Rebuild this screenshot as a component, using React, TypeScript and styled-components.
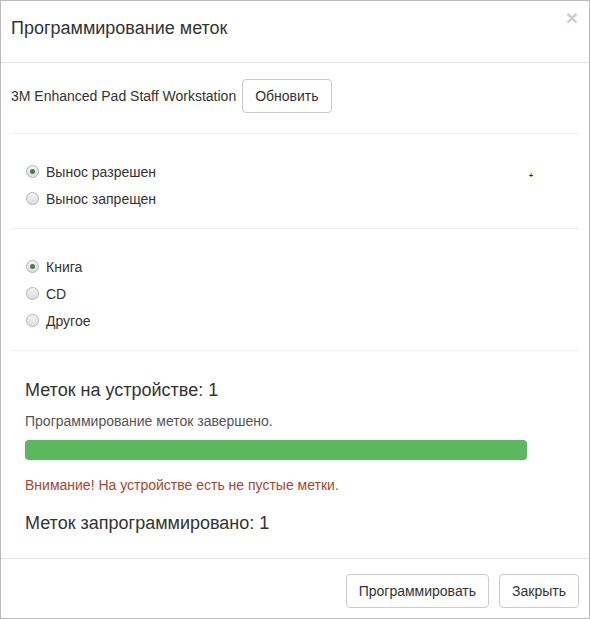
import React from "react";
import styled, { createGlobalStyle } from "styled-components";

const Global = createGlobalStyle`
  html, body { margin: 0; padding: 0; background: #fff; }
  body { font-family: "Liberation Sans", Arial, sans-serif; font-size: 14px; color: #333; }
  * { box-sizing: border-box; }
`;

const Modal = styled.div`
  width: 590px;
  height: 619px;
  border: 1px solid #bcbcbc;
  background: #fff;
  display: flex;
  flex-direction: column;
`;

const Header = styled.div`
  height: 62px;
  border-bottom: 1px solid #e5e5e5;
  padding: 14px 11px 0 10px;
  display: flex;
  justify-content: space-between;
  align-items: flex-start;
`;

const Title = styled.h4`
  margin: 0;
  font-size: 18px;
  font-weight: 400;
  line-height: 26px;
  color: #333;
`;

const Close = styled.span`
  font-size: 21px;
  font-weight: 700;
  line-height: 1;
  color: #000;
  opacity: 0.2;
  margin-top: -8px;
`;

const Body = styled.div`
  flex: 1;
  padding: 0 10px;
`;

const DeviceRow = styled.div`
  display: flex;
  align-items: center;
  gap: 6px;
  padding: 16px 0 20px;
`;

const Button = styled.button`
  font-family: "Liberation Sans", Arial, sans-serif;
  font-size: 14px;
  line-height: 20px;
  padding: 6px 12px;
  border: 1px solid #ccc;
  border-radius: 4px;
  background: #fff;
  color: #333;
  cursor: pointer;
`;

const Rule = styled.hr`
  margin: 0;
  border: 0;
  border-top: 1px solid #eee;
`;

const RadioGroup = styled.div`
  position: relative;
  padding: 24px 15px 16px;
`;

const RadioRow = styled.label`
  display: flex;
  align-items: center;
  height: 27px;
  gap: 7px;
  color: #333;
`;

const RadioDot = styled.span<{ $checked?: boolean }>`
  width: 13px;
  height: 13px;
  border-radius: 50%;
  border: 1px solid #b4b4b4;
  background: linear-gradient(#f3f3f3, #dedede);
  display: flex;
  align-items: center;
  justify-content: center;
  &::after {
    content: "";
    width: 5px;
    height: 5px;
    border-radius: 50%;
    background: ${(p) => (p.$checked ? "#4d7a4d" : "transparent")};
  }
`;

const Speck = styled.span`
  position: absolute;
  left: 518px;
  top: 38px;
  font-size: 7px;
  font-weight: 700;
  line-height: 1;
  color: #222;
`;

const Status = styled.div`
  padding: 26px 14px 0;
`;

const Count = styled.div`
  font-size: 18px;
  line-height: 26px;
  color: #333;
`;

const Info = styled.div<{ $warn?: boolean }>`
  font-size: 14px;
  line-height: 20px;
  color: ${(p) => (p.$warn ? "#a6472f" : "#555")};
  margin-top: ${(p) => (p.$warn ? "15px" : "8px")};
`;

const Progress = styled.div`
  width: 502px;
  height: 20px;
  margin-top: 9px;
  border-radius: 4px;
  background: #f5f5f5;
  overflow: hidden;
`;

const ProgressFill = styled.div`
  height: 100%;
  background: #5cb85c;
`;

const CountBottom = styled(Count)`
  margin-top: 15px;
`;

const Footer = styled.div`
  height: 60px;
  border-top: 1px solid #e5e5e5;
  display: flex;
  justify-content: flex-end;
  align-items: flex-start;
  gap: 10px;
  padding: 15px 10px 0;
`;

export default function App() {
  const progress = 100;
  return (
    <>
      <Global />
      <Modal>
        <Header>
          <Title>Программирование меток</Title>
          <Close>×</Close>
        </Header>
        <Body>
          <DeviceRow>
            <span>3M Enhanced Pad Staff Workstation</span>
            <Button>Обновить</Button>
          </DeviceRow>
          <Rule />
          <RadioGroup>
            <RadioRow>
              <RadioDot $checked />
              Вынос разрешен
            </RadioRow>
            <RadioRow>
              <RadioDot />
              Вынос запрещен
            </RadioRow>
            <Speck>+</Speck>
          </RadioGroup>
          <Rule />
          <RadioGroup>
            <RadioRow>
              <RadioDot $checked />
              Книга
            </RadioRow>
            <RadioRow>
              <RadioDot />
              CD
            </RadioRow>
            <RadioRow>
              <RadioDot />
              Другое
            </RadioRow>
          </RadioGroup>
          <Rule />
          <Status>
            <Count>Меток на устройстве: 1</Count>
            <Info>Программирование меток завершено.</Info>
            <Progress>
              <ProgressFill style={{ width: `${progress}%` }} />
            </Progress>
            <Info $warn>Внимание! На устройстве есть не пустые метки.</Info>
            <CountBottom>Меток запрограммировано: 1</CountBottom>
          </Status>
        </Body>
        <Footer>
          <Button>Программировать</Button>
          <Button>Закрыть</Button>
        </Footer>
      </Modal>
    </>
  );
}
